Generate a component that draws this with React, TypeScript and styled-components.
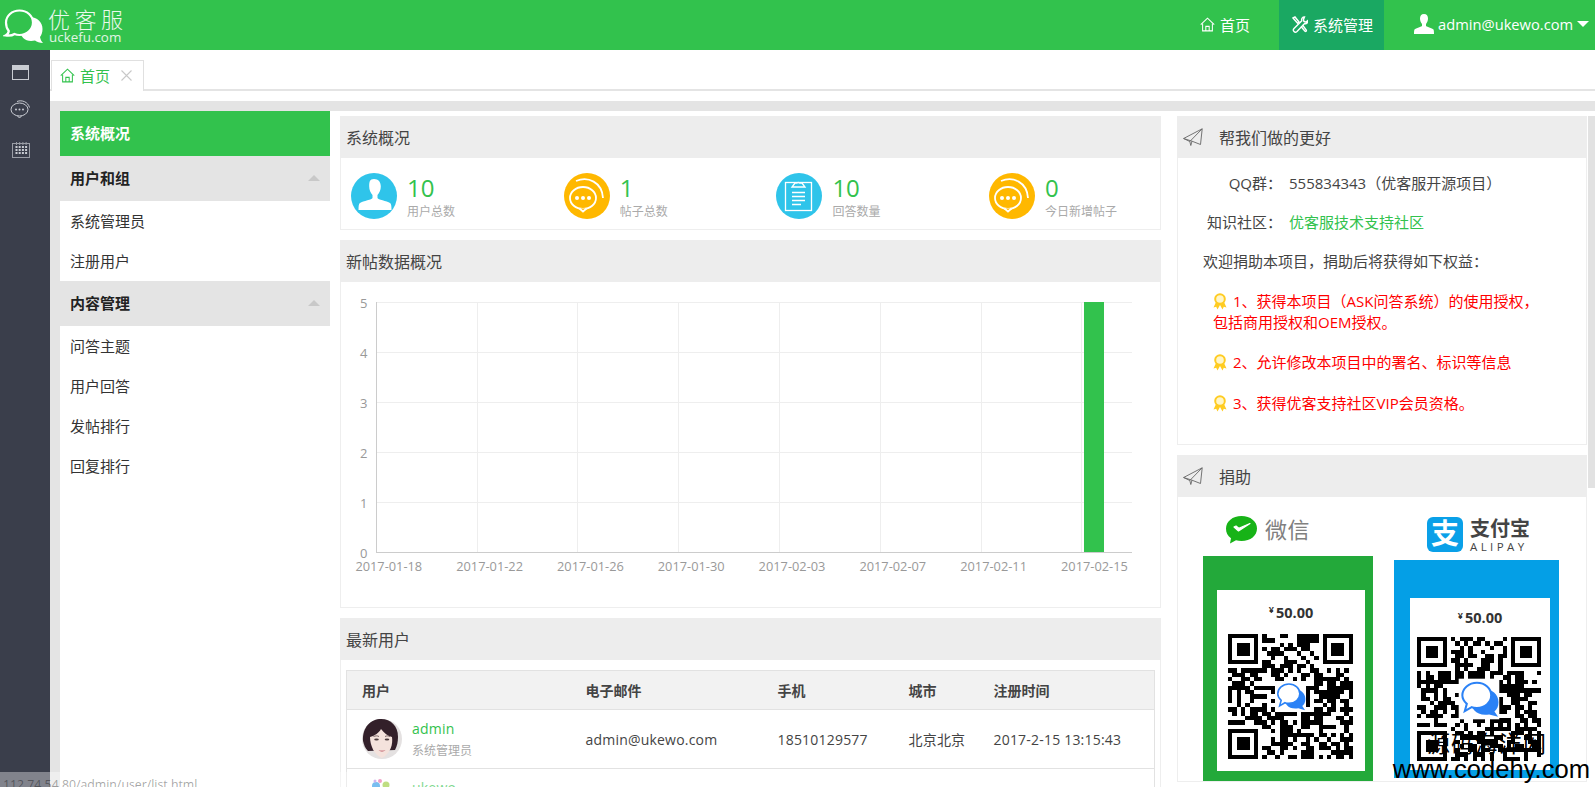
import React from 'react';
import styled, { createGlobalStyle } from 'styled-components';

const GREEN = '#32c24d';
const BASE_FONT = '"Open Sans", "Noto Sans CJK SC", sans-serif';

const GlobalStyle = createGlobalStyle`
  html, body {
    margin: 0;
    padding: 0;
    height: 100%;
    overflow: hidden;
    background: #fff;
  }
  body {
    font-family: ${BASE_FONT};
    font-size: 15px;
    color: #444;
  }
  * {
    box-sizing: border-box;
  }
`;

const Page = styled.div`
  position: relative;
  width: 1595px;
  height: 787px;
  overflow: hidden;
  display: flex;
  flex-direction: column;
`;

const TopBar = styled.header`
  height: 50px;
  flex: none;
  background: ${GREEN};
  color: #fff;
  display: flex;
  align-items: stretch;
`;

const Logo = styled.div`
  display: flex;
  align-items: center;
  padding-left: 3px;
  gap: 3px;
`;

const LogoText = styled.div`
  display: flex;
  flex-direction: column;
  line-height: 1;
  padding-top: 1px;
`;

const LogoName = styled.span`
  font-size: 22px;
  letter-spacing: 4.5px;
  font-weight: 300;
  line-height: 24px;
  opacity: 0.9;
`;

const LogoDomain = styled.span`
  font-size: 13.4px;
  line-height: 13px;
  padding-left: 1px;
  opacity: 0.85;
`;

const Nav = styled.nav`
  margin-left: auto;
  display: flex;
  align-items: stretch;
`;

const NavItem = styled.div<{ $active?: boolean; $width: number; $pad: number }>`
  width: ${(p) => p.$width}px;
  padding: 0 0 2px ${(p) => p.$pad}px;
  display: flex;
  align-items: center;
  gap: 5px;
  background: ${(p) => (p.$active ? '#1aa862' : 'transparent')};
  white-space: nowrap;
`;

const NavEmail = styled.span`
  font-size: 14.7px;
  margin-left: -1px;
`;

const Caret = styled.i`
  width: 0;
  height: 0;
  margin-left: -1px;
  border-left: 6px solid transparent;
  border-right: 6px solid transparent;
  border-top: 6px solid #fff;
`;

const Body = styled.div`
  flex: 1;
  display: flex;
  min-height: 0;
`;

const SideRail = styled.aside`
  width: 50px;
  flex: none;
  background: #3a3e4b;
  display: flex;
  flex-direction: column;
  align-items: center;
  padding: 13px 9px 0 0;
  gap: 19px;
`;

const RailIcon = styled.div<{ $offset?: number }>`
  height: 18px;
  margin-top: ${(p) => p.$offset || 0}px;
  display: flex;
  align-items: center;
  justify-content: center;
`;

const Main = styled.main`
  flex: 1;
  min-width: 0;
  display: flex;
  flex-direction: column;
`;

const TabBar = styled.div`
  height: 51px;
  flex: none;
  padding-top: 10px;
`;

const TabRow = styled.div`
  height: 31px;
  border-bottom: 2px solid #e4e4e4;
  display: flex;
  padding-left: 1px;
`;

const Tab = styled.div`
  width: 93px;
  height: 31px;
  background: #fff;
  border: 1px solid #e0e0e0;
  border-bottom: none;
  display: flex;
  align-items: center;
  padding: 0 0 2px 8px;
  gap: 5px;
  color: ${GREEN};
`;

const TabClose = styled.span`
  margin-left: 6px;
  display: flex;
`;

const Workspace = styled.div`
  flex: 1;
  min-height: 0;
  display: flex;
  align-items: flex-start;
  border-top: 10px solid #e4e4e4;
  border-left: 10px solid #e4e4e4;
`;

const Menu = styled.div`
  width: 270px;
  flex: none;
`;

const MenuHead = styled.div<{ $active?: boolean }>`
  height: 45px;
  display: flex;
  align-items: center;
  justify-content: space-between;
  padding: 0 10px 2px;
  font-weight: 700;
  background: ${(p) => (p.$active ? GREEN : '#e4e4e4')};
  color: ${(p) => (p.$active ? '#fff' : '#222')};
`;

const MenuArrow = styled.i`
  width: 0;
  height: 0;
  border-left: 6px solid transparent;
  border-right: 6px solid transparent;
  border-bottom: 6px solid #c8c8c8;
`;

const MenuItem = styled.div`
  height: 40px;
  line-height: 40px;
  padding-left: 10px;
  color: #333;
`;

const Center = styled.div`
  width: 821px;
  flex: none;
  margin-left: 10px;
  padding-top: 5px;
  display: flex;
  flex-direction: column;
  gap: 10px;
`;

const Right = styled.div`
  width: 410px;
  flex: none;
  margin-left: 16px;
  padding-top: 5px;
  display: flex;
  flex-direction: column;
  gap: 10px;
`;

const Panel = styled.section<{ $height?: number }>`
  border: 1px solid #eee;
  border-top: none;
  background: #fff;
  ${(p) => (p.$height ? `height: ${p.$height}px;` : '')}
`;

const PanelHead = styled.div`
  height: 42px;
  margin: 0 -1px;
  background: #ededed;
  display: flex;
  align-items: center;
  padding: 0 0 1px 6px;
  color: #444;
  font-size: 16px;
`;

const PlaneWrap = styled.span`
  display: flex;
  width: 36px;
  flex: none;
`;

const StatGrid = styled.div`
  display: grid;
  grid-template-columns: repeat(3, 212.7px) 1fr;
  padding: 15px 0 0 10px;
`;

const Stat = styled.div`
  display: flex;
  gap: 10px;
`;

const StatCircle = styled.div<{ $color: string }>`
  width: 46px;
  height: 46px;
  border-radius: 50%;
  background: ${(p) => p.$color};
  overflow: hidden;
  flex: none;
`;

const StatText = styled.div`
  display: flex;
  flex-direction: column;
`;

const StatValue = styled.div`
  font-size: 24px;
  line-height: 28px;
  color: ${GREEN};
  margin-top: 1px;
`;

const StatLabel = styled.div`
  font-size: 12px;
  line-height: 16px;
  color: #aaa;
  margin-top: 2px;
`;

const ChartSvg = styled.svg`
  display: block;
  width: 819px;
  height: 325px;
  font-family: ${BASE_FONT};
  font-size: 13px;
`;

const TableWrap = styled.div`
  padding: 10px 5px 0;
`;

const Table = styled.table`
  width: 809px;
  table-layout: fixed;
  border-collapse: collapse;
  border: 1px solid #e2e2e2;
  font-size: 14px;

  th, td {
    text-align: left;
    padding: 0 0 0 15px;
    border-bottom: 1px solid #e2e2e2;
  }
  th {
    height: 39px;
    background: #f2f2f2;
    font-weight: 700;
    color: #444;
  }
  td {
    height: 59px;
    color: #444;
    letter-spacing: 0.2px;
  }
`;

const UserCell = styled.div`
  display: flex;
  align-items: center;
  gap: 10px;
`;

const UserName = styled.div`
  color: ${GREEN};
  line-height: 22px;
`;

const UserRole = styled.div`
  color: #aaa;
  font-size: 12px;
  line-height: 18px;
  margin-top: 2px;
  letter-spacing: 0;
`;

const HelpBody = styled.div`
  padding-top: 15px;
  line-height: 20px;
`;

const InfoRow = styled.div`
  display: flex;
  margin-bottom: 19px;
`;

const InfoLabel = styled.span`
  width: 104px;
  text-align: right;
  margin-right: 7px;
  color: #444;
`;

const InfoLink = styled.span`
  color: ${GREEN};
`;

const Welcome = styled.div`
  padding-left: 25px;
  margin-bottom: 20px;
`;

const Reward = styled.div`
  padding-left: 35px;
  margin-bottom: 20px;
  line-height: 20.5px;
  color: #f00;
`;

const MedalWrap = styled.span`
  display: inline-block;
  width: 14px;
  height: 17px;
  margin-right: 6px;
  vertical-align: -3px;
`;

const DonateBody = styled.div`
  display: flex;
  gap: 21px;
  padding-left: 25px;
`;

const DonateCol = styled.div<{ $width: number; $top: number }>`
  width: ${(p) => p.$width}px;
  padding-top: ${(p) => p.$top}px;
  flex: none;
`;

const BrandRow = styled.div<{ $height: number; $left: number; $mb: number }>`
  height: ${(p) => p.$height}px;
  margin-bottom: ${(p) => p.$mb}px;
  padding-left: ${(p) => p.$left}px;
  display: flex;
  align-items: center;
  gap: 7px;
`;

const WeixinText = styled.span`
  font-size: 22px;
  line-height: 27px;
  color: #808080;
  letter-spacing: 0.5px;
`;

const AliSquare = styled.div`
  width: 36px;
  height: 35px;
  border-radius: 6px;
  background: #0aa0e8;
  color: #fff;
  font-size: 28px;
  font-weight: 700;
  line-height: 33px;
  text-align: center;
`;

const AliText = styled.div`
  display: flex;
  flex-direction: column;
  color: #444;
`;

const AliName = styled.span`
  font-size: 20px;
  font-weight: 700;
  line-height: 24px;
`;

const AliLatin = styled.span`
  font-size: 11.5px;
  line-height: 12px;
  letter-spacing: 3.4px;
`;

const QrCard = styled.div<{ $bg: string; $h: number; $pt: number; $pl: number }>`
  height: ${(p) => p.$h}px;
  background: ${(p) => p.$bg};
  padding-top: ${(p) => p.$pt}px;
  padding-left: ${(p) => p.$pl}px;
`;

const QrSheet = styled.div<{ $w: number; $h: number; $pl: number }>`
  width: ${(p) => p.$w}px;
  height: ${(p) => p.$h}px;
  background: #fff;
  padding-left: ${(p) => p.$pl}px;
`;

const Price = styled.div<{ $h: number; $w: number }>`
  height: ${(p) => p.$h}px;
  width: ${(p) => p.$w}px;
  display: flex;
  align-items: center;
  justify-content: center;
  font-size: 14.5px;
  font-weight: 700;
  color: #333;

  small {
    font-size: 9px;
    margin-right: 2px;
    margin-top: -5px;
  }
`;

const Scrollbar = styled.div`
  position: absolute;
  top: 116px;
  right: 0;
  width: 7px;
  height: 372px;
  background: #e2e2e2;
`;

const StatusBubble = styled.div`
  position: absolute;
  left: 0;
  bottom: 0;
  width: 495px;
  height: 15px;
  padding: 4px 0 0 3px;
  background: rgba(255, 255, 255, 0.36);
  border-top-right-radius: 4px;
  font-size: 12.3px;
  line-height: 18px;
  color: rgba(0, 0, 0, 0.36);
  overflow: hidden;
`;

const Watermark = styled.div`
  position: absolute;
  right: 5px;
  bottom: 5px;
  text-align: right;
  color: #000;
  font-family: "Liberation Sans", "Noto Sans CJK SC", sans-serif;
`;

const WatermarkCn = styled.div`
  font-size: 23px;
  line-height: 24px;
  padding-right: 43px;
  letter-spacing: 1px;
`;

const WatermarkUrl = styled.div`
  font-size: 25.6px;
  line-height: 26px;
`;

// icons

const HomeIcon = ({ color, size = 15 }: { color: string; size?: number }) => (
  <svg width={size} height={size} viewBox="0 0 16 16" fill="none" stroke={color} strokeWidth="1.1">
    <path d="M0.8 8.2 8 1.2l7.2 7" />
    <path d="M2.8 7v7.8h10.4V7" />
    <path d="M6.2 14.8V10h3.6v4.8" />
  </svg>
);

const ToolsIcon = () => (
  <svg width="16" height="17" viewBox="0 0 16 17" fill="none" stroke="#fff" strokeWidth="1.4">
    <path d="M1 2 3 1l4 5-1.4 1.3Z" />
    <path d="M12.5 1c-2 0-3.4 1.8-2.7 3.7L2 12.5c-.8.9-.8 2.2 0 3s2.1.7 3-.1l7.6-7.8c2 .6 3.6-1 3.3-3.2l-2 1.7-2-.6-.4-2Z" />
    <path d="m9 10.5 4 4.8c.8.6 1.8-.3 1.3-1.2L10.5 9" />
  </svg>
);

const UserGlyph = ({ size = 20 }: { size?: number }) => (
  <svg width={size} height={size} viewBox="0 0 20 20" fill="#fff">
    <path d="M10 0c2.8 0 4 2 4 4.6 0 2.2-.8 4.1-2 5.3v2c0 .7 6.3 1.9 7.5 3.6.4.6.5 2.5.5 4.5H0c0-2 .1-3.9.5-4.5C1.7 13.8 8 12.6 8 11.9v-2C6.8 8.7 6 6.8 6 4.6 6 2 7.2 0 10 0Z" />
  </svg>
);

const WindowIcon = () => (
  <svg width="17" height="15" viewBox="0 0 17 15">
    <rect x="0.5" y="0.5" width="16" height="14" fill="none" stroke="#c9ccd3" />
    <rect x="1" y="1" width="15" height="4" fill="#c9ccd3" />
  </svg>
);

const RailChatIcon = () => (
  <svg width="21" height="20" viewBox="0 0 21 20" fill="none" stroke="#c9ccd3" strokeWidth="1">
    <ellipse cx="9.5" cy="10.5" rx="8.5" ry="6.5" />
    <path d="M7.5 17l2 2 2-2" />
    <path d="M7 2.5c5-2 11 .5 12.5 6" />
    <circle cx="6" cy="10.5" r="1" fill="#c9ccd3" stroke="none" />
    <circle cx="9.5" cy="10.5" r="1" fill="#c9ccd3" stroke="none" />
    <circle cx="13" cy="10.5" r="1" fill="#c9ccd3" stroke="none" />
  </svg>
);

const CalendarIcon = () => (
  <svg width="18" height="16" viewBox="0 0 18 16" fill="#9a9da6" stroke="none">
    <rect x="0.5" y="1.5" width="17" height="14" fill="none" stroke="#9a9da6" />
    {[4, 7.2, 10.4, 13.6].map((x) => (
      <rect key={`t${x}`} x={x} y="0" width="1" height="3" />
    ))}
    {[4, 7, 10].map((y) =>
      [3.5, 6.7, 9.9, 13.1].map((x) => <rect key={`${x}-${y}`} x={x} y={y} width="2" height="2" fill="#c9ccd3" />),
    )}
  </svg>
);

const PlaneIcon = () => (
  <svg width="20" height="18" viewBox="0 0 20 18" fill="none" stroke="#666" strokeWidth="0.9">
    <path d="M0.6 10.5 19.2 0.8 17.5 16.5 9 13.2 Z" />
    <path d="M19.2 0.8 6.8 13.5 7.8 17.5 9 13.2" />
    <path d="M0.6 10.5 6.8 13.5" />
  </svg>
);

const CloseIcon = () => (
  <svg width="11" height="11" viewBox="0 0 11 11" stroke="#c8c8c8" strokeWidth="1.1">
    <path d="M0.5 0.5 10.5 10.5M10.5 0.5 0.5 10.5" />
  </svg>
);

const PersonStat = () => (
  <svg width="46" height="46" viewBox="0 0 46 46" fill="#fff">
    <path d="M23 6c4.5 0 6.8 3 6.8 7.5 0 3.6-1.4 6.6-3.3 8.4v3c0 1.5 9.5 3 12.5 5 1.2.8 1.5 2.8 1.5 7H7.5c0-4.2.3-6.2 1.5-7 3-2 12.500-3.5 12.500-5v-3c-1.900-1.800-3.300-4.800-3.300-8.400C18.200 9 18.500 6 23 6Z" />
  </svg>
);

const ChatStat = () => (
  <svg width="46" height="46" viewBox="0 0 46 46" fill="none" stroke="#fff" strokeWidth="1.8">
    <ellipse cx="19" cy="25" rx="13" ry="11" />
    <path d="M15.5 35.5l3.5 3 3.5-3" fill="#ffb800" />
    <path d="M12 8C24 3 38 9 39 25" />
    <circle cx="13" cy="25" r="2" fill="#fff" stroke="none" />
    <circle cx="19" cy="25" r="2" fill="#fff" stroke="none" />
    <circle cx="25" cy="25" r="2" fill="#fff" stroke="none" />
  </svg>
);

const ClipboardStat = () => (
  <svg width="46" height="46" viewBox="0 0 46 46" fill="none" stroke="#fff" strokeWidth="1.3">
    <rect x="9.5" y="9.5" width="26" height="28" />
    <path d="M16 14h13l-3-4h-2.5a2 2 0 0 0-2.5 0H19Z" fill="#2fc4ea" />
    <path d="M16 19.5h13M16 23.5h13M16 27.5h13M16 31.5h9" />
  </svg>
);

const Medal = () => (
  <svg width="14" height="17" viewBox="0 0 14 17">
    <path d="M3 9 .5 14.5l2.7-.7L4.5 16.5 7 12l2.5 4.5 1.3-2.7 2.7.7L11 9Z" fill="#ffcc22" />
    <circle cx="7" cy="6" r="4.8" fill="#fff6c8" stroke="#ffcc22" strokeWidth="2" />
  </svg>
);

const LogoMark = () => (
  <svg width="42" height="50" viewBox="0 0 42 50">
    <path d="M27 17c7 0 12.5 5 12.5 12 0 3.5-1 6-2.5 8 .5 2.5 1.5 4.5 3 6-3.500 0-6-1-8-2.500-8 2-15-2-15-11.500 0-7 3-12 10-12Z" fill="#fff" />
    <path d="M16.5 10.500c7.500 0 13.500 5.300 13.500 12S24 35 16.500 35c-2 0-3.500-.3-5-1-2 1.500-5 2-9 1.500 2-1 3-2.500 3.300-4.500C3.800 28.700 3 25.800 3 22.500c0-6.700 6-12 13.500-12Z" fill={GREEN} stroke="#fff" strokeWidth="2.2" />
  </svg>
);

const WeChatMark = () => (
  <svg width="33" height="28" viewBox="0 0 33 28">
    <path d="M16.5 0C25.5 0 32 5.500 32 12.500S25.500 25 16.500 25c-2 0-3.800-.3-5.500-.8L5 27.500l1-5.200C2.500 20 1 16.500 1 12.500 1 5.500 7.500 0 16.500 0Z" fill="#17b317" />
    <path d="M9 11l4.5 4L25 7.5 13.8 12.300 11 10Z" fill="#fff" stroke="#fff" strokeWidth="1.2" strokeLinejoin="round" />
  </svg>
);

// a stand-in pattern of the same density as the scanned codes
const qrPath = (seed: number, size: number): string => {
  let s = seed;
  const next = () => {
    s = (s * 1664525 + 1013904223) % 4294967296;
    return s / 4294967296;
  };
  const inFinder = (x: number, y: number) =>
    (x < 8 && y < 8) || (x >= size - 8 && y < 8) || (x < 8 && y >= size - 8);
  let d = '';
  for (let y = 0; y < size; y++) {
    for (let x = 0; x < size; x++) {
      next();
      if (!inFinder(x, y) && next() > 0.48) d += `M${x} ${y}h1v1h-1z`;
    }
  }
  [
    [0, 0],
    [size - 7, 0],
    [0, size - 7],
  ].forEach(([x, y]) => {
    d += `M${x} ${y}h7v1h-7zM${x} ${y + 6}h7v1h-7zM${x} ${y + 1}h1v5h-1zM${x + 6} ${y + 1}h1v5h-1zM${x + 2} ${y + 2}h3v3h-3z`;
  });
  return d;
};

const QrCode = ({ seed, size, logoScale }: { seed: number; size: number; logoScale: number }) => {
  const n = 29;
  const c = n / 2;
  return (
    <svg width={size} height={size} viewBox={`0 0 ${n} ${n}`} shapeRendering="crispEdges" style={{ display: 'block' }}>
      <path d={qrPath(seed, n)} fill="#000" />
      <g transform={`translate(${c} ${c}) scale(${logoScale}) translate(-5 -5)`} shapeRendering="auto">
        <rect width="10" height="10" fill="#fff" />
        <path d="M6 2.5c2.2 0 3.8 1.4 3.8 3.3 0 1-.4 1.8-1 2.3l.9 1.3-2.2-.6C4.5 9.3 3 7.5 3 5.500 3 3.800 4 2.500 6 2.500Z" fill="#2b82f6" />
        <path d="M4.5 1c2 0 3.5 1.4 3.5 3.1S6.5 7.2 4.5 7.2c-.5 0-.9 0-1.3-.2L1.500 8l.5-1.800C1.300 5.600.9 4.900.9 4.100.9 2.400 2.500 1 4.500 1Z" fill="#fff" stroke="#2b82f6" strokeWidth="0.5" />
      </g>
    </svg>
  );
};

const Avatar = () => (
  <svg width="40" height="40" viewBox="0 0 40 40" style={{ flex: 'none' }}>
    <circle cx="20" cy="20" r="20" fill="#e4e1e1" />
    <path d="M1 22C0 8 9 0 19 0c10 0 17 7 17 18 0 5-1 9-3 13L6 32c-3-3-4-6-5-10Z" fill="#33202a" />
    <path d="M8 18c4-1 9-4 11-8 3 4 7 7 11 8 1 7-1 16-10 21C12 36 8 26 8 18Z" fill="#f4e2dc" />
    <path d="M11.5 17.5c2-.8 4-.8 5.5 0M23 17.5c1.5-.8 3.5-.8 5 0" stroke="#5a4446" strokeWidth="0.8" fill="none" />
    <ellipse cx="14.5" cy="20.5" rx="2.3" ry="1" fill="#4b3b3d" />
    <ellipse cx="25" cy="20.5" rx="2.3" ry="1" fill="#4b3b3d" />
    <path d="M16.5 31c2.3.8 4.5.8 7 0-2.3 2.2-4.7 2.2-7 0Z" fill="#c8767f" />
  </svg>
);

const LogoDotsAvatar = () => (
  <svg width="40" height="40" viewBox="0 0 40 40" style={{ flex: 'none' }}>
    <circle cx="14" cy="8" r="4" fill="#2d9ae8" />
    <circle cx="24" cy="7" r="3.5" fill="#9ccc3c" />
    <circle cx="18" cy="3" r="2" fill="#e86aa6" />
    <circle cx="13" cy="3" r="1.5" fill="#b78ae8" />
  </svg>
);

// chart data

const yTicks = [5, 4, 3, 2, 1, 0];
const xLabels = ['2017-01-18', '2017-01-22', '2017-01-26', '2017-01-30', '2017-02-03', '2017-02-07', '2017-02-11', '2017-02-15'];
const xLines = [477.5, 577.5, 678.5, 779.5, 880.5, 981.5, 1081.5];

const BarChart = () => (
  <ChartSvg viewBox="341 282 819 325">
    {yTicks.slice(0, 5).map((t, i) => (
      <line key={t} x1="377" x2="1132" y1={302.5 + i * 50} y2={302.5 + i * 50} stroke="#eee" />
    ))}
    {xLines.map((x) => (
      <line key={x} x1={x} x2={x} y1="302" y2="552" stroke="#eee" />
    ))}
    <line x1="376.5" x2="376.5" y1="302" y2="553" stroke="#ccc" />
    <line x1="376" x2="1132" y1="552.5" y2="552.5" stroke="#ccc" />
    <rect x="1084" y="302" width="20" height="250" fill={GREEN} />
    {yTicks.map((t, i) => (
      <text key={t} x="367.5" y={307.5 + i * 50} textAnchor="end" fill="#999">
        {t}
      </text>
    ))}
    {xLabels.map((l, i) => (
      <text key={l} x={388.8 + i * 100.8} y="571" textAnchor="middle" fill="#999" fontSize="12.8">
        {l}
      </text>
    ))}
  </ChartSvg>
);

const stats = [
  { value: '10', label: '用户总数', color: '#2fc4ea', icon: <PersonStat /> },
  { value: '1', label: '帖子总数', color: '#ffb800', icon: <ChatStat /> },
  { value: '10', label: '回答数量', color: '#2fc4ea', icon: <ClipboardStat /> },
  { value: '0', label: '今日新增帖子', color: '#ffb800', icon: <ChatStat /> },
];

const users = [
  { name: 'admin', role: '系统管理员', email: 'admin@ukewo.com', phone: '18510129577', city: '北京北京', time: '2017-2-15 13:15:43', avatar: <Avatar /> },
  { name: 'ukewo', role: '系统管理员', email: 'ukewo@ukewo.com', phone: '18510129577', city: '北京北京', time: '2017-2-15 13:15:43', avatar: <LogoDotsAvatar /> },
];

export default function App() {
  return (
    <Page>
      <GlobalStyle />
      <TopBar>
        <Logo>
          <LogoMark />
          <LogoText>
            <LogoName>优客服</LogoName>
            <LogoDomain>uckefu.com</LogoDomain>
          </LogoText>
        </Logo>
        <Nav>
          <NavItem $width={79} $pad={0}>
            <HomeIcon color="#fff" />
            首页
          </NavItem>
          <NavItem $active $width={105} $pad={13}>
            <ToolsIcon />
            系统管理
          </NavItem>
          <NavItem $width={211} $pad={30}>
            <UserGlyph />
            <NavEmail>admin@ukewo.com</NavEmail>
            <Caret />
          </NavItem>
        </Nav>
      </TopBar>

      <Body>
        <SideRail>
          <RailIcon><WindowIcon /></RailIcon>
          <RailIcon><RailChatIcon /></RailIcon>
          <RailIcon $offset={4}><CalendarIcon /></RailIcon>
        </SideRail>

        <Main>
          <TabBar>
            <TabRow>
              <Tab>
                <HomeIcon color={GREEN} />
                首页
                <TabClose><CloseIcon /></TabClose>
              </Tab>
            </TabRow>
          </TabBar>

          <Workspace>
            <Menu>
              <MenuHead $active>系统概况</MenuHead>
              <MenuHead>用户和组<MenuArrow /></MenuHead>
              <MenuItem>系统管理员</MenuItem>
              <MenuItem>注册用户</MenuItem>
              <MenuHead>内容管理<MenuArrow /></MenuHead>
              <MenuItem>问答主题</MenuItem>
              <MenuItem>用户回答</MenuItem>
              <MenuItem>发帖排行</MenuItem>
              <MenuItem>回复排行</MenuItem>
            </Menu>

            <Center>
              <Panel $height={114}>
                <PanelHead>系统概况</PanelHead>
                <StatGrid>
                  {stats.map((s) => (
                    <Stat key={s.label}>
                      <StatCircle $color={s.color}>{s.icon}</StatCircle>
                      <StatText>
                        <StatValue>{s.value}</StatValue>
                        <StatLabel>{s.label}</StatLabel>
                      </StatText>
                    </Stat>
                  ))}
                </StatGrid>
              </Panel>

              <Panel $height={368}>
                <PanelHead>新帖数据概况</PanelHead>
                <BarChart />
              </Panel>

              <Panel>
                <PanelHead>最新用户</PanelHead>
                <TableWrap>
                  <Table>
                    <colgroup>
                      <col style={{ width: 224 }} />
                      <col style={{ width: 192 }} />
                      <col style={{ width: 131 }} />
                      <col style={{ width: 85 }} />
                      <col />
                    </colgroup>
                    <thead>
                      <tr>
                        <th>用户</th>
                        <th>电子邮件</th>
                        <th>手机</th>
                        <th>城市</th>
                        <th>注册时间</th>
                      </tr>
                    </thead>
                    <tbody>
                      {users.map((u) => (
                        <tr key={u.name}>
                          <td>
                            <UserCell>
                              {u.avatar}
                              <div>
                                <UserName>{u.name}</UserName>
                                <UserRole>{u.role}</UserRole>
                              </div>
                            </UserCell>
                          </td>
                          <td>{u.email}</td>
                          <td>{u.phone}</td>
                          <td>{u.city}</td>
                          <td>{u.time}</td>
                        </tr>
                      ))}
                    </tbody>
                  </Table>
                </TableWrap>
              </Panel>
            </Center>

            <Right>
              <Panel $height={329}>
                <PanelHead>
                  <PlaneWrap><PlaneIcon /></PlaneWrap>
                  帮我们做的更好
                </PanelHead>
                <HelpBody>
                  <InfoRow>
                    <InfoLabel>QQ群：</InfoLabel>
                    555834343（优客服开源项目）
                  </InfoRow>
                  <InfoRow>
                    <InfoLabel>知识社区：</InfoLabel>
                    <InfoLink>优客服技术支持社区</InfoLink>
                  </InfoRow>
                  <Welcome>欢迎捐助本项目，捐助后将获得如下权益：</Welcome>
                  <Reward>
                    <MedalWrap><Medal /></MedalWrap>
                    1、获得本项目（ASK问答系统）的使用授权，
                    <br />
                    包括商用授权和OEM授权。
                  </Reward>
                  <Reward>
                    <MedalWrap><Medal /></MedalWrap>
                    2、允许修改本项目中的署名、标识等信息
                  </Reward>
                  <Reward>
                    <MedalWrap><Medal /></MedalWrap>
                    3、获得优客支持社区VIP会员资格。
                  </Reward>
                </HelpBody>
              </Panel>

              <Panel>
                <PanelHead>
                  <PlaneWrap><PlaneIcon /></PlaneWrap>
                  捐助
                </PanelHead>
                <DonateBody>
                  <DonateCol $width={170} $top={19}>
                    <BrandRow $height={27} $left={22} $mb={13}>
                      <WeChatMark />
                      <WeixinText>微信</WeixinText>
                    </BrandRow>
                    <QrCard $bg="#23a93a" $h={225} $pt={34} $pl={14}>
                      <QrSheet $w={148} $h={181} $pl={11}>
                        <Price $h={44} $w={126}><small>¥</small>50.00</Price>
                        <QrCode seed={17} size={125} logoScale={0.72} />
                      </QrSheet>
                    </QrCard>
                  </DonateCol>
                  <DonateCol $width={165} $top={20}>
                    <BrandRow $height={35} $left={33} $mb={8}>
                      <AliSquare>支</AliSquare>
                      <AliText>
                        <AliName>支付宝</AliName>
                        <AliLatin>ALIPAY</AliLatin>
                      </AliText>
                    </BrandRow>
                    <QrCard $bg="#049fe6" $h={218} $pt={38} $pl={16}>
                      <QrSheet $w={140} $h={172} $pl={7}>
                        <Price $h={39} $w={126}><small>¥</small>50.00</Price>
                        <QrCode seed={91} size={124} logoScale={0.95} />
                      </QrSheet>
                    </QrCard>
                  </DonateCol>
                </DonateBody>
              </Panel>
            </Right>
          </Workspace>
        </Main>
      </Body>

      <Scrollbar />
      <StatusBubble>112.74.54.80/admin/user/list.html</StatusBubble>
      <Watermark>
        <WatermarkCn>源码海洋网</WatermarkCn>
        <WatermarkUrl>www.codehy.com</WatermarkUrl>
      </Watermark>
    </Page>
  );
}
